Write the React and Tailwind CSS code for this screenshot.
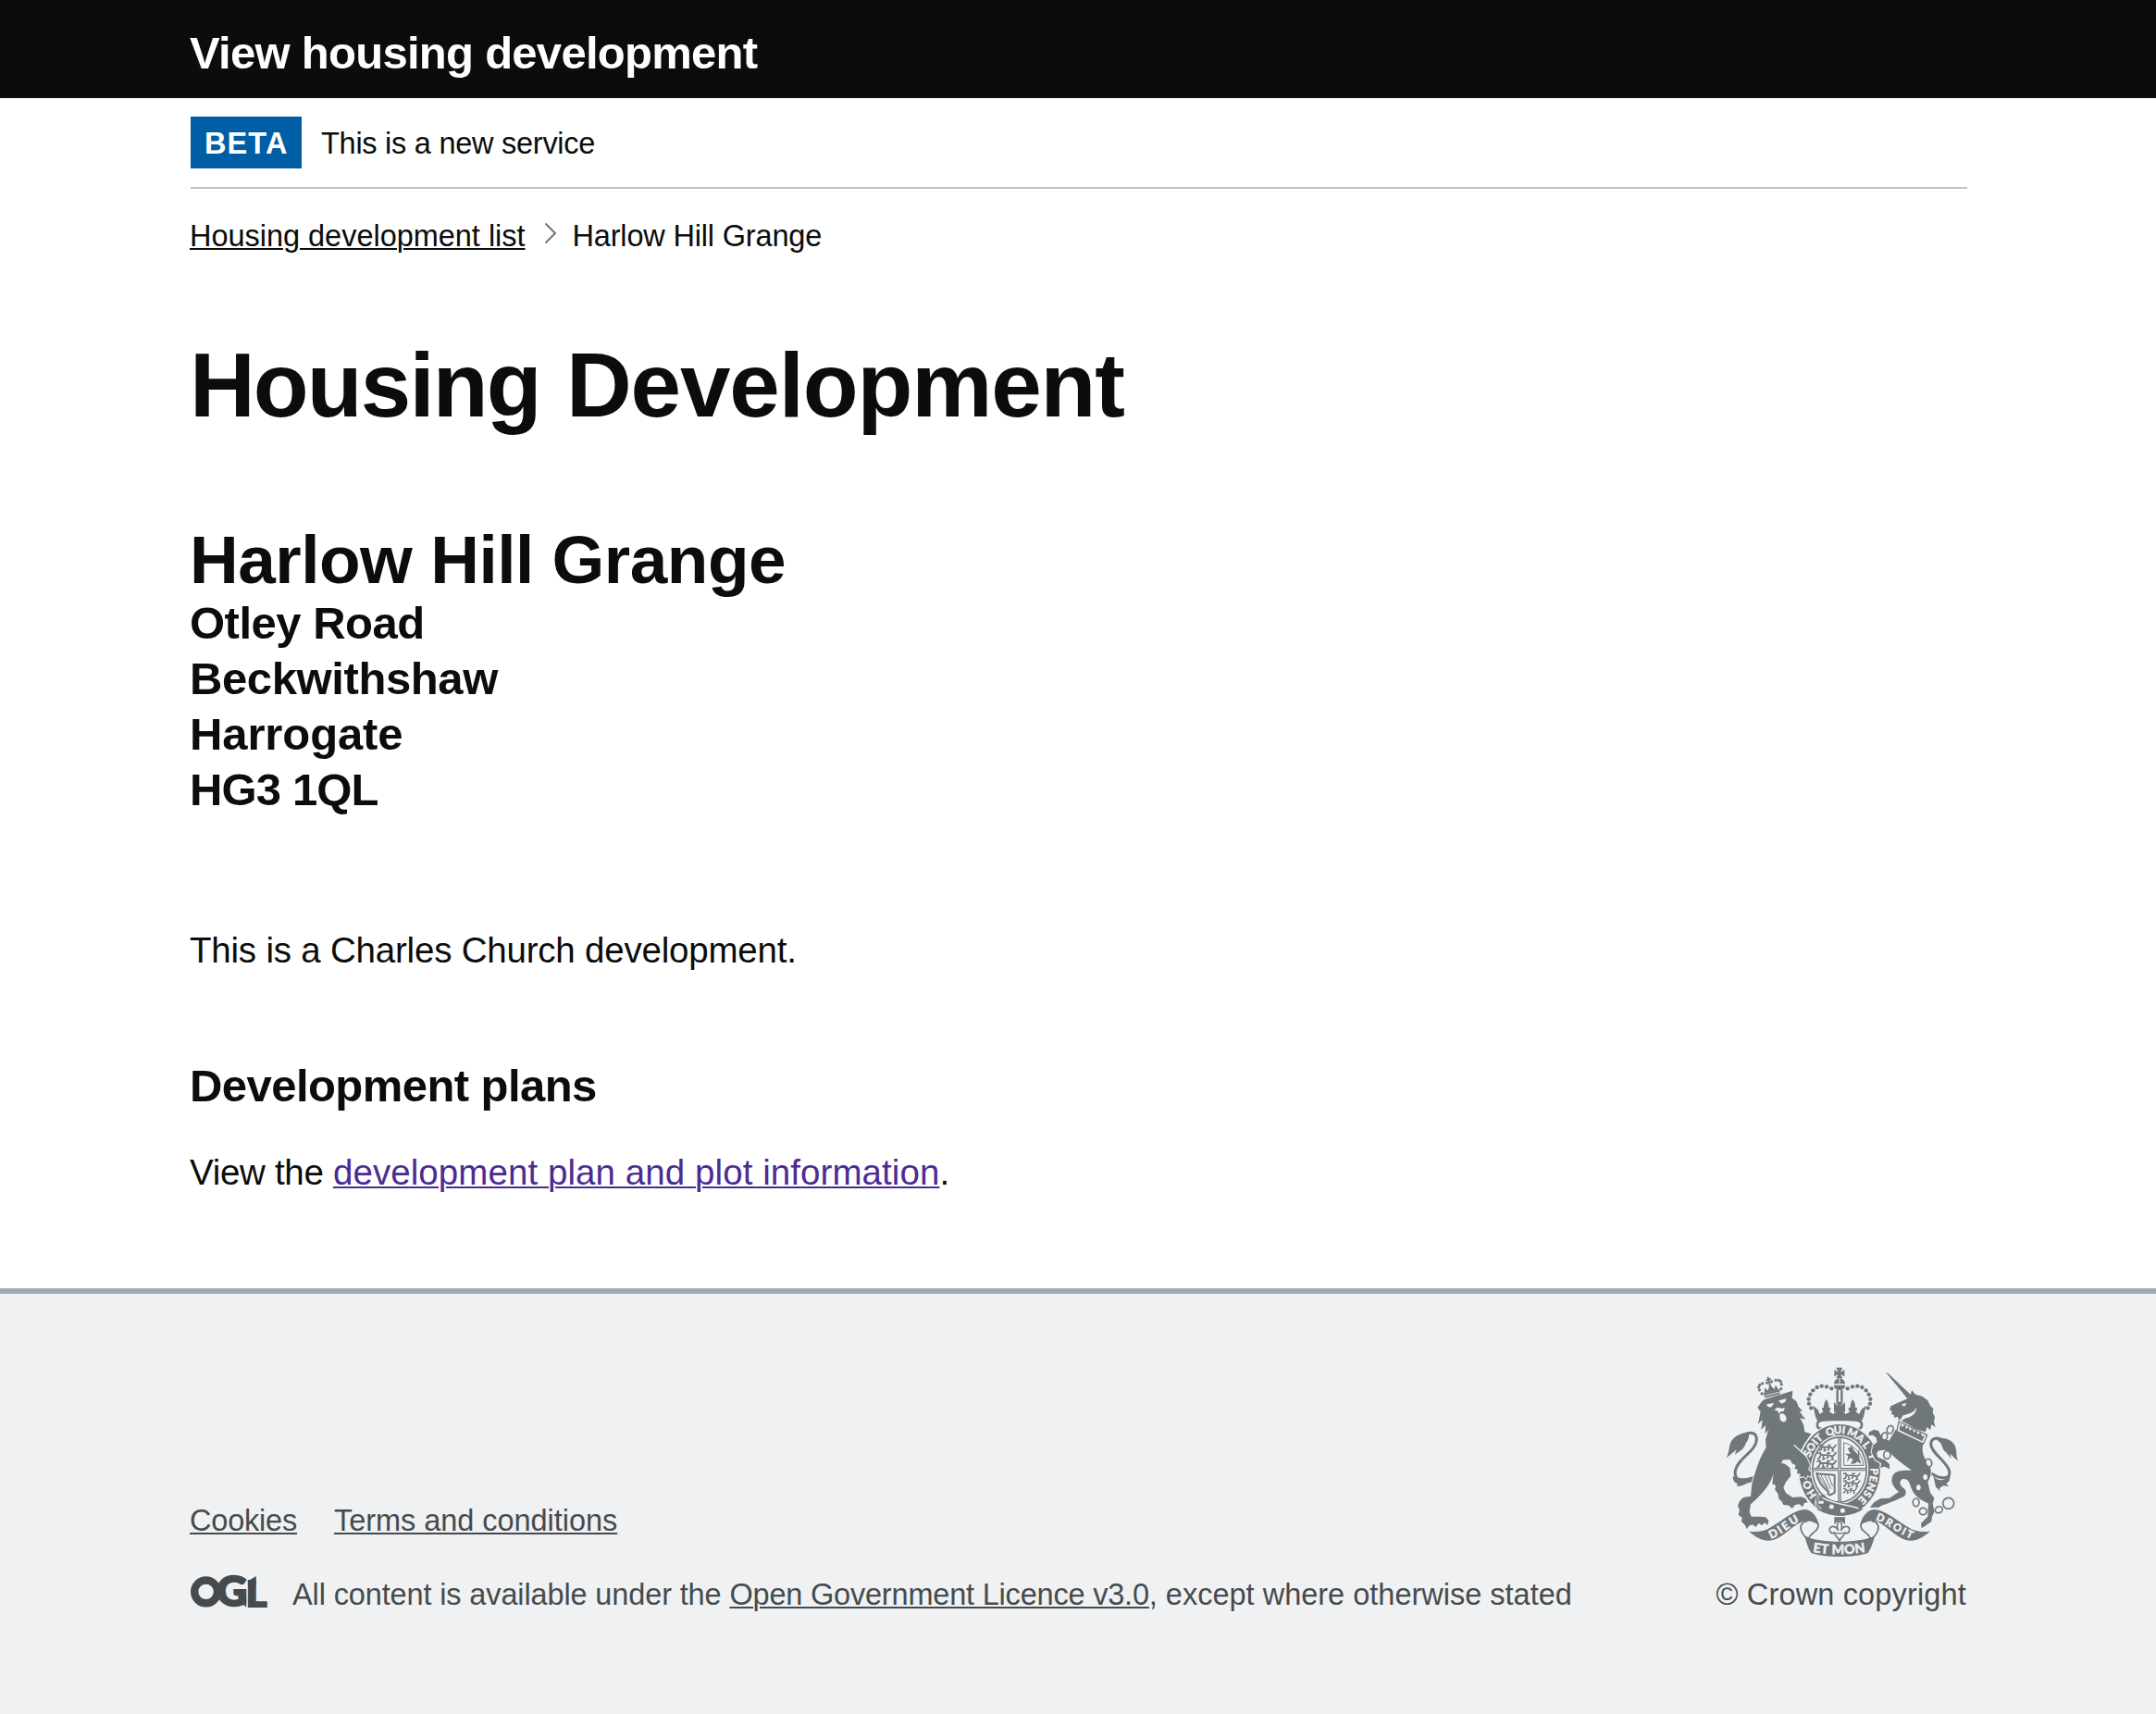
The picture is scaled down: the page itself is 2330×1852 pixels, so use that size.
const INK = "#6f777b";
const PAPER = "#f0f1f3";
const CUTOUT = { stroke: PAPER, strokeWidth: 6, paintOrder: "stroke", strokeLinejoin: "round" };

function arcPoints(x0, y0, cx, cy, x1, y1, n) {
  return Array.from({ length: n }, (_, i) => {
    const t = i / (n - 1);
    const u = 1 - t;
    return [u * u * x0 + 2 * u * t * cx + t * t * x1, u * u * y0 + 2 * u * t * cy + t * t * y1];
  });
}

function Lion() {
  return (
    <g>
      {/* tail */}
      <path d="M166 416C140 430 100 424 106 388C114 346 172 326 175 288C176 266 160 260 138 269" fill="none" stroke={INK} strokeWidth="9" />
      <path d="M166 264C140 260 112 268 98 285C84 302 90 315 78 345L92 334L110 319L104 336C122 322 130 322 138 304C144 290 152 284 150 270Z" />
      <path d="M98 405C98 420 104 426 114 430L110 438C130 437 142 432 158 418L168 404C140 414 116 414 98 405Z" />
      {/* body */}
      <path {...CUTOUT} d="M178 182L195 160L204 155L292 128L290 152L304 162L311 180L324 194L314 195L334 222L316 216L328 240L331 262L352 268L330 300L316 326L300 306L335 340L348 368L342 384L352 392L350 408L340 402L336 413L328 405L318 409L315 396L306 398L308 384L298 380L302 370L290 364L284 352L262 352L255 362L268 366L283 378L286 404L270 424L262 442L270 460L292 474L320 472L334 478L341 490L330 492L324 505L314 496L300 498L290 510L280 500L262 498L256 486L248 480L244 462L234 448L238 436L226 430L230 396C222 430 196 460 156 496L152 520L158 536L185 536L204 538L214 548L211 565L202 556L192 564L182 558L172 570L162 562L150 566L144 576L136 562L126 552L128 540L116 530L120 516L114 500L120 486L132 474L156 470L160 430C172 385 185 345 206 312L204 286L214 254L203 268L204 240L190 254L194 222L180 236L188 196Z" />
      {/* face */}
      <path d="M207 172L232 168L222 182L212 180ZM246 160L272 154L268 164L256 170Z" fill={PAPER} />
      <path d="M232 190L244 182L258 186L266 182L264 194L252 196L248 204L244 194Z" fill={PAPER} />
      <path d="M250 206C256 198 266 202 271 214C274 226 266 232 258 228C250 224 250 216 250 206Z" fill={PAPER} />
      <path d="M296 304L338 342" stroke={PAPER} strokeWidth="4" />
      {/* small crown */}
      <g transform="rotate(-14 222 125)">
        <path d="M194 131H250L246 146H197Z" />
        <path d="M198 139H246" stroke={PAPER} strokeWidth="2.5" />
        <path d="M198 131L204 114L212 126L222 106L232 126L240 114L246 131Z" />
        <path d="M222 82V112M214 91H230" stroke={INK} strokeWidth="6" />
        {arcPoints(190, 130, 172, 92, 214, 100, 6).map(([x, y], i) => <circle key={i} cx={x} cy={y} r="4.8" />)}
        {arcPoints(254, 130, 272, 92, 230, 100, 6).map(([x, y], i) => <circle key={i} cx={x} cy={y} r="4.8" />)}
      </g>
    </g>
  );
}

function Unicorn() {
  return (
    <g>
      <path d="M594 68L602 72L678 144L664 154Z" />
      <path d="M664 154L674 144L678 126L690 140L712 146L730 160L738 176L748 186L746 200L753 212L750 230L755 246L742 238L738 256L728 246L722 262L690 252L664 236L644 226L656 218C672 214 694 206 694 180C688 200 664 204 650 208L638 226L632 212L622 216L620 206L612 204L614 194L606 190L610 178L640 164Z" />
      <path d="M644 172L662 168L654 180Z" fill={PAPER} />
      {/* tail */}
      <path d="M742 396C776 420 806 412 800 388C790 354 740 330 740 300C742 278 764 280 778 288" fill="none" stroke={INK} strokeWidth="9" />
      <path d="M758 286C780 276 808 286 818 306C826 324 820 336 828 356L802 332L806 348L788 326C776 318 778 304 770 296Z" />
      <path d="M748 404C764 424 786 422 804 400L800 420L790 430L798 438L780 436L768 444L770 454L756 440Z" />
      {/* body */}
      <path {...CUTOUT} d="M626 254L716 298C708 324 716 342 730 362C746 384 742 404 730 424L738 458L751 476L746 494L752 520L744 536L742 552L722 566L710 574L708 558L718 548L730 536L732 494C706 482 688 470 678 448C672 430 668 412 650 414C634 420 640 436 652 444C660 450 662 462 654 470L628 482L598 494L580 500L572 506L542 507L556 490L576 478L606 476L636 456C618 440 608 422 616 404C626 384 650 386 678 386C648 366 626 348 606 328L590 320L572 322L564 330L568 344L590 352L606 366L606 382L590 374L576 378L580 364L560 352L548 328L552 306L566 294L562 280L552 272L538 274L540 262L556 254L570 258L580 276L604 290Z" />
      {/* coronet collar */}
      <path d="M636 228L728 272L716 300L630 260Z" fill={PAPER} stroke={INK} strokeWidth="4" />
      <path d="M638 256L642 234L648 246L656 238L660 252L668 246L672 258L680 250L686 264L692 254L698 270L706 262L712 276L720 272L712 292Z" />
      {/* chain */}
      <g fill={PAPER} stroke={INK} strokeWidth="5">
        <ellipse cx="608" cy="254" rx="10" ry="13" transform="rotate(20 608 254)" />
        <ellipse cx="590" cy="276" rx="9" ry="12" transform="rotate(10 590 276)" />
        <ellipse cx="598" cy="336" rx="11" ry="13" />
        <ellipse cx="733" cy="362" rx="10" ry="13" transform="rotate(-15 733 362)" />
        <ellipse cx="692" cy="490" rx="10" ry="13" />
        <ellipse cx="715" cy="519" rx="12" ry="11" />
        <ellipse cx="766" cy="514" rx="12" ry="10" transform="rotate(-25 766 514)" />
        <circle cx="797" cy="493" r="18" />
      </g>
      <ellipse cx="722" cy="408" rx="7" ry="9" fill={PAPER} />
      <ellipse cx="700" cy="442" rx="7" ry="9" fill={PAPER} />
    </g>
  );
}

const PEARLS = [[418, 121], [402, 115], [386, 113], [371, 117], [358, 127], [349, 140], [344, 155], [345, 170], [352, 184]];

function Crown() {
  return (
    <g>
      {/* cross and orb */}
      <path d="M433 53H454L447 68L460 60V82L447 74L454 88H433L440 74L427 82V60L440 68Z" />
      <path d="M426 106A18 18 0 0 1 462 106ZM425 110H463A19 16 0 0 1 425 110Z" />
      <path d="M444 88V106" stroke={PAPER} strokeWidth="3" />
      <path d="M437 126V164M451 126V164" stroke={INK} strokeWidth="7" />
      {PEARLS.map(([x, y]) => <circle key={x} cx={x} cy={y} r="6.6" />)}
      {PEARLS.map(([x, y]) => <circle key={x} cx={888 - x} cy={y} r="6.6" />)}
      {/* fleurs and crosses */}
      <path d="M358 176L374 190L380 204L392 196C384 190 386 180 393 184C392 172 396 164 401 156C406 164 410 172 409 184C416 180 418 190 410 196L424 204L434 194L426 198V166L440 178L432 164H456L448 178L462 166V198L454 194L464 204L478 196C470 190 472 180 479 184C478 172 482 164 487 156C492 164 496 172 495 184C502 180 504 190 496 196L508 204L514 190L530 176L522 212L516 226H372L366 212Z" />
      <rect x="368" y="222" width="152" height="34" rx="15" fill={INK} />
      <path d="M376 240C374 228 386 226 444 226C502 226 514 228 512 240C511 250 506 248 498 248H390C382 248 377 248 376 240Z" fill={PAPER} />
    </g>
  );
}

function LionPassant({ x, y, s = 1 }) {
  return (
    <g transform={`translate(${x} ${y}) scale(${s})`} fill="none" stroke={INK} strokeWidth="5">
      <path d="M2 4L10 2L14 8L34 9L46 12M12 8L8 18L2 20M18 12L22 20L16 22M34 11L30 20M44 12L48 21L42 22M46 12C56 10 50 2 58 2M30 4L40 2" />
    </g>
  );
}

/* Garter motto: letter and its clockwise angle from the top, in degrees. */
const GARTER_MOTTO = [
  ["H", -127], ["O", -112],
  ["S", -66], ["O", -55], ["I", -45], ["T", -37],
  ["Q", -16], ["U", -3], ["I", 7],
  ["M", 22], ["A", 37], ["L", 51],
  ["Y", 70],
  ["P", 92], ["E", 103], ["N", 115], ["S", 127], ["E", 139],
];

function GarterLetter({ ch, angle }) {
  const t = (angle * Math.PI) / 180;
  const x = 444 + 113 * Math.sin(t);
  const y = 385 - 130 * Math.cos(t);
  const r = (Math.atan2(130 * Math.sin(t), 113 * Math.cos(t)) * 180) / Math.PI;
  return (
    <text x={x} y={y} dy="0.36em" textAnchor="middle" transform={`rotate(${r} ${x} ${y})`}>{ch}</text>
  );
}

function Garter() {
  return (
    <g>
      <ellipse cx="444" cy="385" rx="132" ry="148" {...CUTOUT} />
      <ellipse cx="444" cy="384" rx="94" ry="112" fill={PAPER} />
      <ellipse cx="444" cy="384" rx="90" ry="108" />
      <ellipse cx="444" cy="384" rx="85" ry="103" fill={PAPER} />
      <path d="M444 280V488M358 383H530" stroke={INK} strokeWidth="10" />
      <path d="M444 280V488M358 383H530" stroke={PAPER} strokeWidth="2.5" />
      <LionPassant x={376} y={302} />
      <LionPassant x={370} y={327} s={1.1} />
      <LionPassant x={368} y={353} s={1.15} />
      <LionPassant x={454} y={394} />
      <LionPassant x={454} y={418} />
      <LionPassant x={454} y={443} s={0.8} />
      {/* rampant lion */}
      <path d="M458 296V370H522C520 342 500 308 458 296Z" fill="none" stroke={INK} strokeWidth="3" />
      <path d="M470 316L484 308L490 320L506 338L514 366L502 358L494 364L480 366L488 350L478 346L468 360L472 340L462 332L480 332Z" />
      <path d="M502 352C512 344 500 328 508 322" fill="none" stroke={INK} strokeWidth="4" />
      {/* harp */}
      <path d="M370 396C388 402 404 396 428 402V458C412 470 402 466 408 456C388 440 374 424 370 396Z" fill="none" stroke={INK} strokeWidth="6" />
      <path d="M384 402L410 452M396 402L416 446M408 402L422 438M378 406L404 446" stroke={INK} strokeWidth="3" />
      <g fill={PAPER} stroke={PAPER} strokeWidth="1.2" fontFamily='Lato, "Liberation Sans", sans-serif' fontWeight="900" fontSize="34">
        {GARTER_MOTTO.map(([ch, angle]) => <GarterLetter key={angle} ch={ch} angle={angle} />)}
      </g>
      {/* strap and buckle */}
      <path d="M366 492L390 470L408 482L470 494L520 512L508 520C460 542 410 534 372 514Z" />
      <path d="M388 476C440 500 480 498 506 510" fill="none" stroke={PAPER} strokeWidth="4" />
      <path d="M386 466C364 472 362 506 386 514M372 490H392" fill="none" stroke={PAPER} strokeWidth="9" />
      <path d="M398 470C372 462 366 482 374 490C366 500 376 518 394 514" fill="none" stroke={INK} strokeWidth="5" />
      <circle cx="418" cy="504" r="7.5" fill={PAPER} />
      <circle cx="454" cy="517" r="7.5" fill={PAPER} />
      {/* fleur-de-lis */}
      <path d="M427 538H462V562L444 545L427 562Z" />
      <path d="M444 548C434 560 434 570 440 582C430 562 410 566 412 580C414 592 426 592 428 586C426 600 438 600 444 614C450 600 462 600 460 586C462 592 474 592 476 580C478 566 458 562 448 582C454 570 454 560 444 548Z" fill={PAPER} stroke={INK} strokeWidth="5" />
      <path d="M432 590H456" stroke={INK} strokeWidth="4" />
    </g>
  );
}

function RibbonHalf() {
  return (
    <g>
      <path d="M150 584C180 588 205 582 222 570C258 550 290 518 328 513C352 512 372 534 378 566C366 554 350 548 326 551C296 560 262 604 226 613C196 618 178 606 150 584Z" />
      <path d="M340 551C322 552 314 566 320 582C324 594 332 600 336 606" fill="none" stroke={INK} strokeWidth="5" />
      <path d="M375 558C378 588 350 584 344 608" fill="none" stroke={INK} strokeWidth="5" />
    </g>
  );
}

function Motto() {
  return (
    <g>
      <RibbonHalf />
      <g transform="translate(888 0) scale(-1 1)">
        <RibbonHalf />
      </g>
      <path d="M331 598C370 624 518 624 558 598C554 618 548 636 536 654C490 670 398 670 352 654C340 636 336 618 331 598Z" />
      <defs>
        <path id="dieu" d="M222 608C262 594 286 562 326 547" />
        <path id="droit" d="M560 547C592 554 622 588 686 612" />
        <path id="etmon" d="M357 651Q444 665 536 650" />
      </defs>
      <g fill={PAPER} stroke={PAPER} strokeWidth="1.2" fontFamily='Lato, "Liberation Sans", sans-serif' fontWeight="900">
        <text fontSize="37"><textPath href="#dieu" textLength="108">DIEU</textPath></text>
        <text fontSize="34"><textPath href="#droit" textLength="132">DROIT</textPath></text>
        <text fontSize="43"><textPath href="#etmon" textLength="172">ET MON</textPath></text>
      </g>
    </g>
  );
}

function Crest() {
  return (
    <svg className="mr-2 h-[208px] w-[252px]" viewBox="75 45 756 624" fill={INK} aria-hidden="true">
      <Crown />
      <Garter />
      <Lion />
      <Unicorn />
      <Motto />
    </svg>
  );
}

function OglLogo() {
  return (
    <svg className="ml-px h-[34px] w-[83px] overflow-visible" viewBox="0 0 83 34" fill="#454b4d" role="img" aria-label="OGL">
      <circle cx="16.6" cy="16.9" r="12.4" fill="none" stroke="#454b4d" strokeWidth="8.4" />
      <g fontFamily="Lato, sans-serif" fontWeight="900" stroke="#454b4d">
        <text x="28" y="32.3" fontSize="43" strokeWidth="2.4" textLength="33" lengthAdjust="spacingAndGlyphs">G</text>
        <text x="59.8" y="32.7" fontSize="38" strokeWidth="2" textLength="22.5" lengthAdjust="spacingAndGlyphs">L</text>
      </g>
      {/* pointed terminals */}
      <path d="M52 22H60.2V33.6L52 27ZM61.9 10V5.4L70.8 0V10Z" />
    </svg>
  );
}

const link = "underline decoration-2 underline-offset-[2px]";

export default function App() {
  return (
    <div className="bg-white font-['Liberation_Sans',Arial,sans-serif] text-[#0b0c0c]">
      <header className="h-[106px] bg-[#0b0c0c] pt-[27px]">
        <div className="mx-auto w-[1920px] text-[49px] leading-[60px] font-bold tracking-[-0.723px] text-white">
          View housing development
        </div>
      </header>

      <div className="mx-auto w-[1920px]">
        <div className="ml-px flex w-[1920px] items-start border-b-2 border-[#bfc1c3] pt-5 pb-5 text-[32.5px] leading-[58px]">
          <strong className="h-[56px] w-[120px] bg-[#005ea5] pl-[15px] tracking-[1.1px] text-white">BETA</strong>
          <span className="ml-[21px] h-[56px] tracking-[-0.262px]">This is a new service</span>
        </div>

        <nav className="mt-[31px] flex h-10 text-[32.5px] leading-10">
          <a href="#" className={`${link} tracking-[-0.026px]`}>Housing development list</a>
          <svg className="mt-[5px] ml-[19px] h-6 w-[16px]" viewBox="0 0 16 24" fill="none" stroke="#6f777b" strokeWidth="2">
            <path d="M2.5 1.5L13 12L2.5 22.5" />
          </svg>
          <span className="ml-[16px] tracking-[-0.174px]">Harlow Hill Grange</span>
        </nav>

        <main>
          <h1 className="mt-[91px] text-[98px] leading-[100px] font-bold tracking-[-1.15px]">
            <span className="mr-[3px] tracking-[-1.9px]">Housing </span>Development
          </h1>
          <h2 className="mt-[101px] text-[73px] leading-[75px] font-bold tracking-[-0.5px]">Harlow Hill Grange</h2>
          <div className="mt-px text-[49px] leading-[60px] font-bold">
            <div className="tracking-[-0.503px]">Otley Road</div>
            <div className="tracking-[-0.4px]">Beckwithshaw</div>
            <div className="tracking-[-0.113px]">Harrogate</div>
            <div className="tracking-[-0.855px]">HG3 1QL</div>
          </div>
          <p className="mt-[118px] text-[38.5px] leading-[51px] tracking-[-0.207px]">This is a Charles Church development.</p>
          <h3 className="mt-[91px] text-[49px] leading-[60px] font-bold tracking-[-0.558px]">Development plans</h3>
          <p className="mt-[38px] text-[38.5px] leading-[51px]">
            <span className="tracking-[-0.3px]">View the </span>
            <a href="#" className={`${link} tracking-[0.073px] text-[#4c2c92]`}>development plan and plot information</a>.
          </p>
        </main>
      </div>

      <footer className="mt-[100px] h-[460px] border-t-[6px] border-[#a1acb2] bg-[#f0f1f3] pt-[77px] text-[32.5px] leading-10 text-[#454b4d]">
        <div className="mx-auto flex w-[1920px] items-end justify-between">
          <div>
            <div className="flex gap-10">
              <a href="#" className={`${link} tracking-[-0.2px]`}>Cookies</a>
              <a href="#" className={`${link} tracking-[-0.05px]`}>Terms and conditions</a>
            </div>
            <div className="mt-10 flex items-start">
              <OglLogo />
              <span className="ml-[27px] whitespace-nowrap">
                <span className="tracking-[-0.13px]">All content is available under the </span>
                <a href="#" className={`${link} tracking-[-0.196px]`}>Open Government Licence v3.0</a>
                <span>, except where otherwise stated</span>
              </span>
            </div>
          </div>
          <div className="flex flex-col items-end">
            <Crest />
            <a href="#" className="mt-5 tracking-[0.159px]">© Crown copyright</a>
          </div>
        </div>
      </footer>
    </div>
  );
}
